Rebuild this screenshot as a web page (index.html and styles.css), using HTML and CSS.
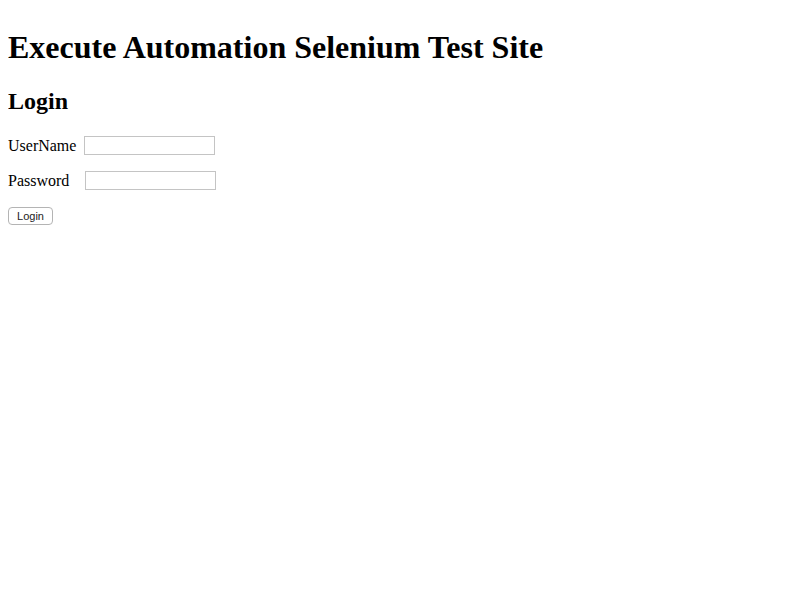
FILE: index.html
```html
<!DOCTYPE html>
<html>
<head>
<meta charset="utf-8">
<title>Execute Automation</title>
<link rel="stylesheet" href="styles.css">
</head>
<body>
<h1 class="title">Execute Automation Selenium Test Site</h1>
<h2 class="subtitle">Login</h2>
<form class="login-form">
  <p class="row"><label class="label">UserName</label> <input class="field" type="text" name="UserName"></p>
  <p class="row"><label class="label label-pw">Password</label> <input class="field" type="password" name="Password"></p>
  <p class="row"><button class="btn" type="button">Login</button></p>
</form>
</body>
</html>
```

FILE: styles.css
```css
body {
  margin: 8px;
  font-family: "Liberation Serif", "Times New Roman", serif;
  font-size: 16px;
  color: #000;
  background: #fff;
}
.title {
  font-size: 32px;
  font-weight: bold;
  margin: 21px 0 22px;
}
.subtitle {
  font-size: 24px;
  font-weight: bold;
  margin: 22px 0 21px;
}
.login-form {
  margin: 0;
}
.row {
  margin: 16px 0;
  height: 19px;
  display: flex;
  align-items: center;
}
.label {
  margin-right: 8px;
}
.label-pw {
  margin-right: 16px;
}
.field {
  box-sizing: border-box;
  width: 131px;
  height: 19px;
  border: 1px solid #c4c4c4;
  padding: 1px 2px;
  margin: 0;
  font-size: 13px;
  background: #fff;
}
.btn {
  box-sizing: border-box;
  width: 45px;
  height: 18px;
  padding: 0;
  border: 1px solid #b4b4b4;
  border-radius: 4px;
  background: #fff;
  font-family: "Liberation Sans", Arial, sans-serif;
  font-size: 11px;
  color: #222;
  line-height: 16px;
}
```
